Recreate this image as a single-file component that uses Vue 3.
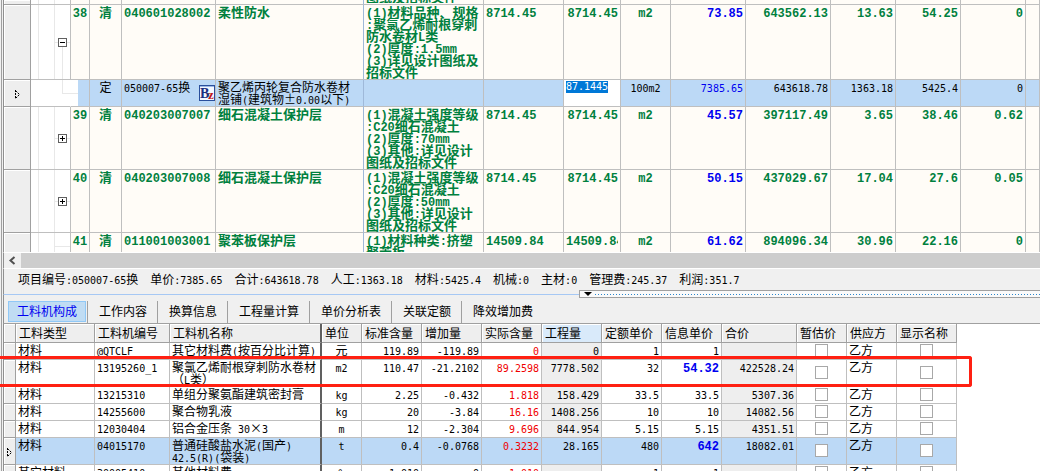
<script setup>
import { h } from 'vue'

// Splits mixed text so that Latin runs get the half-width face.
const Txt = (props) =>
  String(props.v ?? '')
    .split(/([\x20-\x7e]+)/)
    .filter(Boolean)
    .map((s) => h('span', { class: /[\x20-\x7e]/.test(s) ? 'latin' : 'han' }, s))
Txt.props = ['v']

const bill = [
  { cut: true, spec: '图纸及招标文件' },
  {
    no: '38', kind: '清', code: '040601028002', name: '柔性防水', open: true,
    spec: '(1)材料品种、规格\n:聚氯乙烯耐根穿刺\n防水卷材L类\n(2)厚度:1.5mm\n(3)详见设计图纸及\n招标文件',
    expr: '8714.45', qty: '8714.45', unit: 'm2', price: '73.85', nums: ['643562.13', '13.63', '54.25', '0']
  },
  {
    focus: true, no: '', kind: '定', code: '050007-65换', name: '聚乙烯丙轮复合防水卷材\n湿铺(建筑物±0.00以下)', spec: '',
    expr: '', qty: '87.1445', unit: '100m2', price: '7385.65', nums: ['643618.78', '1363.18', '5425.4', '0']
  },
  {
    no: '39', kind: '清', code: '040203007007', name: '细石混凝土保护层',
    spec: '(1)混凝土强度等级\n:C20细石混凝土\n(2)厚度:70mm\n(3)其他:详见设计\n图纸及招标文件',
    expr: '8714.45', qty: '8714.45', unit: 'm2', price: '45.57', nums: ['397117.49', '3.65', '38.46', '0.62']
  },
  {
    no: '40', kind: '清', code: '040203007008', name: '细石混凝土保护层',
    spec: '(1)混凝土强度等级\n:C20细石混凝土\n(2)厚度:50mm\n(3)其他:详见设计\n图纸及招标文件',
    expr: '8714.45', qty: '8714.45', unit: 'm2', price: '50.15', nums: ['437029.67', '17.04', '27.6', '0.05']
  },
  {
    no: '41', kind: '清', code: '011001003001', name: '聚苯板保护层',
    spec: '(1)材料种类:挤塑\n聚苯板',
    expr: '14509.84', qty: '14509.84', unit: 'm2', price: '61.62', nums: ['894096.34', '30.96', '22.16', '0']
  }
]

const summary = [
  '项目编号:050007-65换', '单价:7385.65', '合计:643618.78', '人工:1363.18', '材料:5425.4',
  '机械:0', '主材:0', '管理费:245.37', '利润:351.7'
]

const tabs = ['工料机构成', '工作内容', '换算信息', '工程量计算', '单价分析表', '关联定额', '降效增加费']

const heads = [
  '工料类型', '工料机编号', '工料机名称', '单位', '标准含量', '增加量', '实际含量', '工程量',
  '定额单价', '信息单价', '合价', '暂估价', '供应方', '显示名称'
]

const items = [
  { c: ['材料', '@QTCLF', '其它材料费(按百分比计算)', '元', '119.89', '-119.89', '0', '0', '1', '1', ''] },
  { tall: true, strong: true, c: ['材料', '13195260_1', '聚氯乙烯耐根穿刺防水卷材\n（L类）', 'm2', '110.47', '-21.2102', '89.2598', '7778.502', '32', '54.32', '422528.24'] },
  { c: ['材料', '13215310', '单组分聚氨酯建筑密封膏', 'kg', '2.25', '-0.432', '1.818', '158.429', '33.5', '33.5', '5307.36'] },
  { c: ['材料', '14255600', '聚合物乳液', 'kg', '20', '-3.84', '16.16', '1408.256', '10', '10', '14082.56'] },
  { c: ['材料', '12030404', '铝合金压条 30×3', 'm', '12', '-2.304', '9.696', '844.954', '5.15', '5.15', '4351.51'] },
  { tall: true, strong: true, focus: true, c: ['材料', '04015170', '普通硅酸盐水泥(国产)\n42.5(R)(袋装)', 't', '0.4', '-0.0768', '0.3232', '28.165', '480', '642', '18082.01'] },
  { c: ['其它材料', '30005410', '其他材料费', '%', '1.010', '0', '1.010', '', '1', '1', ''] }
]

const cellClass = (i, row) => ({
  name: i === 2,
  mid: i === 3,
  num: i > 3,
  red: i === 6,
  calc: i === 7 || i === 10,
  hot: i === 9 && row.strong
})
</script>

<template>
  <div class="frame">
    <main class="inner">
      <section class="bill">
        <table>
          <colgroup>
            <col class="w27" /><col class="w40" /><col class="w19" /><col class="w32" /><col class="w94" />
            <col class="w148" /><col class="w120" /><col class="w80" /><col class="w57" /><col class="w50" />
            <col class="w75" /><col class="w85" /><col class="w65" /><col class="w65" /><col class="w65" /><col />
          </colgroup>
          <tbody>
            <tr v-for="(r, i) in bill" :key="i" :class="{ focus: r.focus, cut: r.cut }">
              <td class="ind">
                <svg v-if="r.focus" class="ptr" width="7" height="11" viewBox="0 0 7 11">
                  <path d="M1.5 1v9M1.5 1.5l4 4-4 4" fill="none" stroke="#000" stroke-dasharray="2 1" />
                </svg>
              </td>
              <td class="tree" :class="{ open: r.open, node: r.no, leaf: r.focus }">
                <button v-if="r.no && r.no !== '41'" class="box" type="button" :aria-label="r.open ? '折叠' : '展开'">
                  <svg width="9" height="9" viewBox="0 0 9 9">
                    <path d="M2 4.5h5" stroke="#000" />
                    <path v-if="!r.open" d="M4.5 2v5" stroke="#000" />
                  </svg>
                </button>
              </td>
              <td class="mid no"><div><Txt :v="r.no" /></div></td>
              <td class="mid"><div><Txt :v="r.kind" /></div></td>
              <td>
                <div class="code">
                  <div><Txt :v="r.code" /></div>
                  <svg v-if="r.focus" class="bz" width="16" height="16" viewBox="0 0 16 16">
                    <rect x="0.5" y="0.5" width="15" height="15" fill="#f4f8ff" stroke="#2a4f9c" />
                    <path d="M1 1.5h14" stroke="#9db8e4" />
                    <text x="1" y="13" class="bz-b">B</text>
                    <text x="9" y="14" class="bz-z">z</text>
                  </svg>
                </div>
              </td>
              <td class="title"><div><Txt :v="r.name" /></div></td>
              <td><div class="spec"><Txt :v="r.spec" /></div></td>
              <td><div><Txt :v="r.expr" /></div></td>
              <td v-if="r.focus" class="edit"><input type="text" :value="r.qty" aria-label="工程量" /></td>
              <td v-else class="num"><div class="clip"><Txt :v="r.qty" /></div></td>
              <td class="mid"><div><Txt :v="r.unit" /></div></td>
              <td class="num price"><div><Txt :v="r.price" /></div></td>
              <td v-for="n in 4" :key="n" class="num"><div><Txt :v="r.nums ? r.nums[n - 1] : ''" /></div></td>
              <td></td>
            </tr>
          </tbody>
        </table>
      </section>

      <div class="hbar">
        <button type="button" aria-label="向左滚动">
          <svg width="17" height="15" viewBox="0 0 17 15"><path d="M10.5 4l-4 3.5 4 3.5" fill="none" stroke="#505050" stroke-width="2" /></svg>
        </button>
        <div class="thumb"></div>
      </div>

      <section class="summary">
        <span v-for="s in summary" :key="s"><Txt :v="s" /></span>
        <div class="splitter">
          <svg width="8" height="4" viewBox="0 0 8 4"><path d="M0 0h8L4 4z" /></svg>
          <i></i>
        </div>
      </section>

      <nav class="tabs">
        <button v-for="(t, i) in tabs" :key="t" type="button" :class="{ active: i === 0 }">{{ t }}</button>
      </nav>

      <section class="detail">
        <table>
          <colgroup>
            <col class="w12" /><col class="w79" /><col class="w75" /><col class="w152" /><col class="w40" />
            <col class="w60" /><col class="w60" /><col class="w60" /><col class="w60" /><col class="w60" /><col class="w60" />
            <col class="w75" /><col class="w50" /><col class="w50" /><col class="w60" />
          </colgroup>
          <thead>
            <tr>
              <th></th>
              <th v-for="(t, i) in heads" :key="t" :class="{ name: i === 2, sel: i === 7 }">{{ t }}</th>
            </tr>
          </thead>
          <tbody>
            <tr v-for="r in items" :key="r.c[1]" :class="{ tall: r.tall, focus: r.focus }">
              <td class="ind">
                <svg v-if="r.focus" class="ptr" width="7" height="11" viewBox="0 0 7 11">
                  <path d="M1.5 1v9M1.5 1.5l4 4-4 4" fill="none" stroke="#000" stroke-dasharray="2 1" />
                </svg>
              </td>
              <td v-for="(v, i) in r.c" :key="i" :class="cellClass(i, r)"><div><Txt :v="v" /></div></td>
              <td class="check"><input type="checkbox" aria-label="暂估价" /></td>
              <td><div>乙方</div></td>
              <td class="check"><input type="checkbox" aria-label="显示名称" /></td>
            </tr>
          </tbody>
        </table>
      </section>
    </main>
    <div class="mark"></div>
  </div>
</template>

<style>
html,
body {
  margin: 0;
  overflow: hidden;
}
.latin {
  font-family: "DejaVu Sans Mono", monospace;
  font-size: 10px;
  line-height: 0;
}
</style>

<style scoped>
.frame {
  position: relative;
  box-sizing: border-box;
  height: 100vh;
  padding-left: 1px;
  overflow: hidden;
  background: #f0f0f0;
  color: #000;
  font: 12px/12px "Noto Sans CJK SC", "Liberation Sans", sans-serif;
}
.inner {
  display: flex;
  flex-direction: column;
  height: 100%;
  border-left: 1px solid #a0a0a0;
}
.inner > * {
  margin-left: 1px;
  border-left: 1px solid #909090;
}
button,
input {
  margin: 0;
  padding: 0;
  border: 0;
  border-radius: 0;
  font: inherit;
  color: inherit;
}
table {
  table-layout: fixed;
  border-spacing: 0;
}
td,
th {
  box-sizing: border-box;
  padding: 1px 2px;
  vertical-align: top;
  text-align: left;
  font-weight: inherit;
  border-right: 1px solid #bfbfbf;
  border-bottom: 1px solid #bfbfbf;
}
td > div {
  white-space: pre;
}
.clip {
  overflow: hidden;
}
.mid {
  text-align: center;
}
.num {
  text-align: right;
}
.w12 { width: 12px; }
.w19 { width: 19px; }
.w27 { width: 27px; }
.w32 { width: 32px; }
.w40 { width: 40px; }
.w50 { width: 50px; }
.w57 { width: 57px; }
.w60 { width: 60px; }
.w65 { width: 65px; }
.w75 { width: 75px; }
.w79 { width: 79px; }
.w80 { width: 80px; }
.w85 { width: 85px; }
.w94 { width: 94px; }
.w120 { width: 120px; }
.w148 { width: 148px; }
.w152 { width: 152px; }

.bill {
  flex: 0 0 252px;
  overflow: hidden;
  background: #fffcf7;
}
.bill table {
  width: 100%;
}
.bill tr {
  color: #00803e;
  font-size: 13px;
  font-weight: bold;
}
.bill tr :deep(.latin) {
  font-family: "Liberation Mono", monospace;
  font-size: 12px;
}
.bill tr.focus {
  background: #bcd9f6;
  color: #000;
  font-size: 12px;
  font-weight: normal;
}
.bill tr.focus :deep(.latin) {
  font-family: "DejaVu Sans Mono", monospace;
  font-size: 10px;
}
.bill td.no {
  padding: 1px 0;
}
.bill td.title {
  border-right-color: #9fb9d9;
}
.bill .price {
  color: #0000f0;
}
.bill .cut td {
  height: 5px;
  padding-top: 0;
}
.bill .cut .spec {
  display: flex;
  align-items: flex-end;
  height: 3px;
  overflow: hidden;
}
.bill td.ind,
.detail td.ind {
  padding: 0;
  text-align: center;
  vertical-align: middle;
  background: #eee;
  border-color: #a0a0a0;
  box-shadow: inset 1px 1px #fff;
}
.ptr {
  display: inline-block;
  vertical-align: middle;
}
.bill td.tree {
  position: relative;
  padding: 0 0 0 27px;
  vertical-align: middle;
  background:
    linear-gradient(#e8e8e8, #e8e8e8) 7px 0 / 1px 100% no-repeat,
    linear-gradient(#e8e8e8, #e8e8e8) 23px 0 / 1px 100% no-repeat,
    #fff;
}
.bill td.tree.node {
  background:
    linear-gradient(#e8e8e8, #e8e8e8) 7px 0 / 1px 100% no-repeat,
    linear-gradient(#e8e8e8, #e8e8e8) 23px 0 / 1px 100% no-repeat,
    linear-gradient(#e8e8e8, #e8e8e8) 23px 50% / 16px 1px no-repeat,
    #fff;
}
.bill td.tree.leaf {
  background: #fff;
  border-right-color: #fff;
}
.tree.open::after,
.tree.leaf::after {
  content: "";
  position: absolute;
  left: 31px;
  border-left: 1px solid #e8e8e8;
}
.tree.open::after {
  top: 50%;
  bottom: 0;
}
.tree.leaf::after {
  top: 0;
  width: 15px;
  height: 50%;
  border-bottom: 1px solid #e8e8e8;
}
.bill .focus td.no {
  background: linear-gradient(90deg, #fff 7px, #bcd9f6 7px);
}
.box {
  position: relative;
  z-index: 1;
  display: block;
  width: 9px;
  height: 9px;
  background: #fff;
  box-shadow: inset 0 0 0 1px #606060;
}
.box svg {
  display: block;
}
td > .code {
  display: flex;
  justify-content: space-between;
  margin-right: -2px;
}
.code .bz {
  flex: none;
  margin: 4px 0 0;
}
.bz text {
  font-family: "Liberation Serif", serif;
  font-weight: bold;
}
.bz-b {
  font-size: 14px;
  fill: #1a2f80;
}
.bz-z {
  font-size: 13px;
  fill: #c01820;
}
.bill td.edit {
  background: #fff;
}
.edit input {
  display: block;
  width: 42px;
  height: 12px;
  background: #0078d7;
  color: #fff;
  font: 10px/12px "DejaVu Sans Mono", monospace;
}

.hbar {
  display: flex;
  flex: 0 0 15px;
  border-top: 1px solid #fff;
  border-bottom: 1px solid #fff;
  background: #f0f0f0;
}
.hbar button {
  width: 17px;
  background: #f0f0f0;
}
.hbar svg {
  display: block;
}
.thumb {
  flex: 1;
  background: #cdcdcd;
}

.summary {
  position: relative;
  display: flex;
  gap: 12px;
  flex: 0 0 21px;
  padding: 4px 0 0 14px;
  border-bottom: 1px solid #a6c8f4;
  white-space: nowrap;
}
.splitter {
  position: absolute;
  left: 575px;
  right: 0;
  bottom: -4px;
  display: flex;
  align-items: center;
  gap: 3px;
  box-sizing: border-box;
  height: 8px;
  padding-left: 4px;
  border: 1px solid #a0a0a0;
  border-right: 0;
  background: #fafafa;
}
.splitter i {
  flex: 1;
  height: 1px;
  background: repeating-linear-gradient(90deg, #2a86cc 0 1px, transparent 1px 3px);
}

.tabs {
  display: flex;
  flex: 0 0 22px;
  padding: 6px 0 0 4px;
}
.tabs button {
  height: 22px;
  padding: 0 10px 2px 11px;
  border-left: 1px solid #a0a0a0;
  background: none;
}
.tabs .active {
  height: 21px;
  margin-right: 1px;
  padding: 0 8px 1px;
  border: 1px solid #90c8f6;
  background: #c0dcf3;
  color: #0000f0;
}

.detail {
  flex: 1;
  min-height: 0;
  overflow: hidden;
  border-top: 1px solid #a0a0a0;
  background: #fff;
}
.detail table {
  width: 953px;
}
.detail th {
  height: 19px;
  padding: 3px 0 0 3px;
  background: #eee;
  border-color: #a0a0a0;
  box-shadow: inset 1px 1px #fff;
  white-space: nowrap;
}
.detail th.sel {
  background: #d9eafa;
}
.detail td {
  height: 17px;
  padding: 1px 2px 0;
}
.detail .tall td {
  height: 27px;
}
.detail .name {
  border-right: 2px solid #606060;
}
.detail .calc {
  background: #eee;
}
.detail .red {
  color: #f00000;
}
.detail .hot {
  color: #0000f0;
  font-weight: bold;
}
.detail .hot :deep(.latin) {
  font-family: "Liberation Mono", monospace;
  font-size: 12px;
}
.detail .focus td:not(.ind) {
  background: #bcd9f6;
}
.detail td.check {
  padding: 0 0 2px;
  text-align: center;
  vertical-align: middle;
}
.check input {
  appearance: none;
  display: block;
  box-sizing: border-box;
  width: 13px;
  height: 13px;
  margin: 0 auto;
  border: 1px solid #a8a8a8;
  background: #fff;
}
.mark {
  position: absolute;
  top: 356px;
  left: 0;
  box-sizing: border-box;
  width: 972px;
  height: 31px;
  border: 3px solid #ff2012;
  border-left: 0;
  border-radius: 0 3px 3px 0;
  pointer-events: none;
}
</style>
